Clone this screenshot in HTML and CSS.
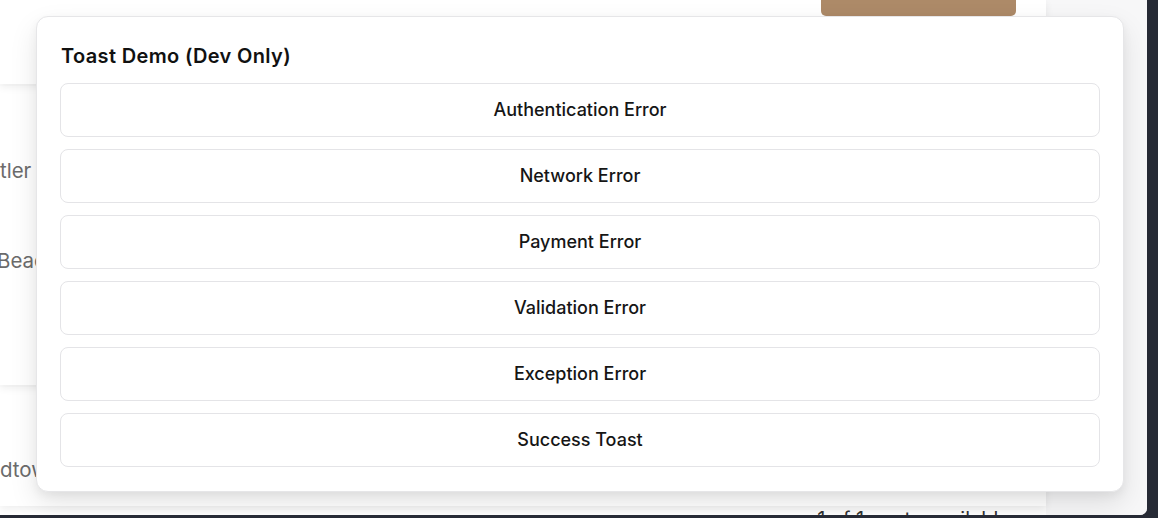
FILE: index.html
```html
<!DOCTYPE html>
<html lang="en">
<head>
<meta charset="utf-8">
<title>Toast Demo</title>
<link rel="stylesheet" href="styles.css">
</head>
<body>
<div class="window">
  <div class="main">
    <div class="card card-top">
      <div class="top-actions"><span class="brown-btn"></span></div>
    </div>
    <div class="card card-list">
      <div class="line">tler</div>
      <div class="line line-shift">Beach</div>
    </div>
    <div class="card card-bottom">
      <div class="line">dtown</div>
    </div>
    <div class="footer-note">1 of 1 spots available</div>
  </div>
  <div class="side"></div>

  <div class="modal" role="dialog" aria-label="Toast Demo (Dev Only)">
    <h2 class="modal-title">Toast Demo (Dev Only)</h2>
    <div class="btn-list">
      <button class="demo-btn">Authentication Error</button>
      <button class="demo-btn">Network Error</button>
      <button class="demo-btn">Payment Error</button>
      <button class="demo-btn">Validation Error</button>
      <button class="demo-btn">Exception Error</button>
      <button class="demo-btn">Success Toast</button>
    </div>
  </div>
</div>
</body>
</html>
```

FILE: styles.css
```css
* { box-sizing: border-box; }

html, body {
  margin: 0;
  padding: 0;
  width: 1158px;
  height: 518px;
  overflow: hidden;
  background: #262a35;
  font-family: Inter, "Noto Sans", "Liberation Sans", sans-serif;
}

.window {
  position: relative;
  width: 1147px;
  height: 515px;
  background: #f7f7f8;
  border-bottom-right-radius: 7px;
  overflow: hidden;
  display: flex;
}

.main {
  width: 1046px;
  flex: none;
  background: #ffffff;
  display: flex;
  flex-direction: column;
  gap: 2px;
}

.side {
  flex: 1;
  background: #f7f7f8;
}

.card {
  flex: none;
  background: #ffffff;
  box-shadow: 0 3px 8px rgba(0, 0, 0, 0.07);
  position: relative;
}

.card-top {
  height: 84px;
  z-index: 3;
  display: flex;
  justify-content: flex-end;
  padding-right: 30px;
}

.top-actions {
  display: flex;
  align-items: flex-end;
  height: 16px;
}

.brown-btn {
  display: block;
  width: 195px;
  height: 16px;
  background: #ad8a68;
  border-radius: 0 0 5px 5px;
}

.card-list {
  height: 299px;
  z-index: 2;
  padding-top: 73px;
  display: flex;
  flex-direction: column;
  gap: 66px;
}

.card-bottom {
  height: 119px;
  z-index: 1;
  padding-top: 71px;
}

.line {
  font-size: 20.5px;
  line-height: 24px;
  color: #6b6b6b;
  white-space: nowrap;
}

.line-shift {
  margin-left: -3px;
}

.footer-note {
  flex: none;
  text-align: right;
  padding: 0 36px 0 0;
  font-size: 20px;
  line-height: 22px;
  color: #333333;
}

.modal {
  position: absolute;
  left: 36px;
  top: 16px;
  width: 1088px;
  height: 476px;
  background: #ffffff;
  border: 1px solid #e6e6e8;
  border-radius: 12px;
  padding: 25px 23px 24px;
  box-shadow: 0 12px 28px rgba(0, 0, 0, 0.10), 0 4px 10px rgba(0, 0, 0, 0.05);
  z-index: 10;
}

.modal-title {
  margin: 0 0 13px;
  font-size: 20px;
  line-height: 28px;
  font-weight: 600;
  letter-spacing: 0.35px;
  color: #111111;
  padding-left: 1px;
}

.btn-list {
  display: flex;
  flex-direction: column;
  gap: 12px;
}

.demo-btn {
  display: block;
  width: 100%;
  height: 54px;
  background: #ffffff;
  border: 1px solid #e4e4e7;
  border-radius: 8px;
  font-family: Inter, "Noto Sans", "Liberation Sans", sans-serif;
  font-size: 18px;
  font-weight: 500;
  color: #161616;
  cursor: pointer;
  padding: 0 0 2px;
}
```
